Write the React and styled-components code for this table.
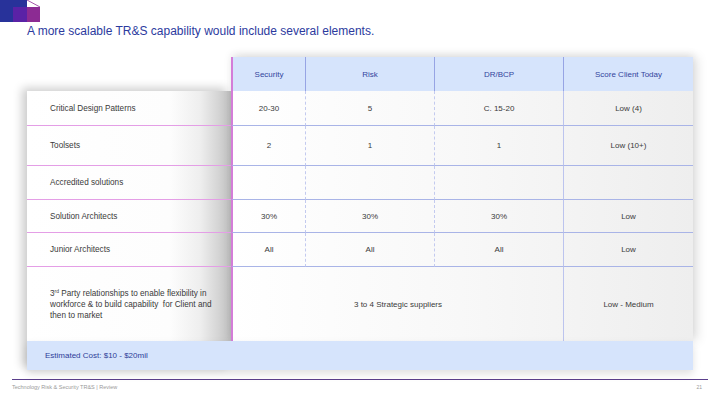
import styled, { createGlobalStyle } from 'styled-components';

const GlobalStyle = createGlobalStyle`
  html, body {
    margin: 0;
    padding: 0;
    background: #fff;
  }
  body {
    font-family: "Liberation Sans", Arial, sans-serif;
  }
`;

const rows = [
  { label: 'Critical Design Patterns', cells: ['20-30', '5', 'C. 15-20', 'Low (4)'] },
  { label: 'Toolsets', cells: ['2', '1', '1', 'Low (10+)'] },
  { label: 'Accredited solutions', cells: ['', '', '', ''] },
  { label: 'Solution Architects', cells: ['30%', '30%', '30%', 'Low'] },
  { label: 'Junior Architects', cells: ['All', 'All', 'All', 'Low'] },
];

const headers = ['Security', 'Risk', 'DR/BCP', 'Score Client Today'];

function App() {
  return (
    <Page>
      <GlobalStyle />
      <Logo>
        <svg width="41" height="23" viewBox="0 0 41 23">
          <rect x="0" y="0" width="27" height="22" fill="#28329a" />
          <rect x="13" y="7" width="14" height="15" fill="#5a22a6" />
          <rect x="27" y="7" width="13" height="15" fill="#8c2b93" />
          <path d="M27 0 L40 7" stroke="#8c2b93" strokeWidth="0.8" fill="none" />
        </svg>
      </Logo>
      <Title>A more scalable TR&amp;S capability would include several elements.</Title>

      <Table>
        <LeftPanel />
        <DataPanel />
        {headers.map((h, i) => (
          <HeadCell key={h} $col={i + 2} $first={i === 0}>{h}</HeadCell>
        ))}
        {rows.map((r, i) => (
          <Row key={r.label} r={r} row={i + 2} />
        ))}
        <LabelCell $row={7} $last>
          <span>
            3<sup>rd</sup> Party relationships to enable flexibility in
            <br />
            workforce &amp; to build capability&nbsp; for Client and
            <br />
            then to market
          </span>
        </LabelCell>
        <DataCell $row={7} $col="2 / 5" $first $last>3 to 4 Strategic suppliers</DataCell>
        <DataCell $row={7} $col={5} $last $solid>Low - Medium</DataCell>
        <CostBar>Estimated Cost: $10 - $20mil</CostBar>
      </Table>

      <FooterLine />
      <Footer>
        <span>Technology Risk &amp; Security TR&amp;S | Review</span>
        <PageNum>21</PageNum>
      </Footer>
    </Page>
  );
}

function Row({ r, row }) {
  return (
    <>
      <LabelCell $row={row}>{r.label}</LabelCell>
      {r.cells.map((c, i) => (
        <DataCell key={i} $row={row} $col={i + 2} $first={i === 0} $solid={i === 3}>
          {c}
        </DataCell>
      ))}
    </>
  );
}

const Page = styled.div`
  width: 720px;
  height: 405px;
  overflow: hidden;
  display: flex;
  flex-direction: column;
  background: #fff;
  & > * {
    flex-shrink: 0;
  }
`;

const Logo = styled.div`
  height: 22px;
  overflow: hidden;
  svg {
    display: block;
  }
`;

const Title = styled.div`
  margin: 1px 0 0 27px;
  font-size: 12px;
  line-height: 16px;
  color: #2c3a9e;
`;

const Table = styled.div`
  margin: 18px 0 0 27px;
  width: 666px;
  display: grid;
  grid-template-columns: 204px 74px 129px 129px 130px;
  grid-template-rows: 34px 35px 40px 34px 33px 34px 74px 29px;
  font-size: 8px;
  color: #3a3a3a;
`;

const LeftPanel = styled.div`
  grid-column: 1;
  grid-row: 2 / 9;
  background: linear-gradient(
    to right,
    #ffffff 0%,
    #fdfdfd 70%,
    #eeeeee 85%,
    #d4d4d4 94%,
    #bdbdbd 100%
  );
  box-shadow: -5px -3px 9px rgba(0, 0, 0, 0.2);
  z-index: 0;
`;

const DataPanel = styled.div`
  grid-column: 2 / 6;
  grid-row: 1 / 8;
  background: linear-gradient(to right, #ffffff 0%, #f8f8f8 50%, #eeeeee 100%);
  box-shadow: 5px 0 10px rgba(0, 0, 0, 0.1), 0 -3px 8px rgba(0, 0, 0, 0.08);
  z-index: 1;
`;

const HeadCell = styled.div`
  grid-row: 1;
  grid-column: ${(p) => p.$col};
  z-index: 2;
  display: flex;
  align-items: center;
  justify-content: center;
  background: #d6e4fc;
  color: #34449c;
  border-left: ${(p) => (p.$first ? '2px solid #d47dd8' : '1px solid #97a4e4')};
`;

const LabelCell = styled.div`
  grid-column: 1;
  grid-row: ${(p) => p.$row};
  z-index: 2;
  display: flex;
  align-items: center;
  padding-left: 23px;
  font-size: 8.2px;
  line-height: 11px;
  color: #3a3a3a;
  border-bottom: ${(p) => (p.$last ? 'none' : '1px solid #e49ee6')};
  sup {
    font-size: 5px;
    line-height: 0;
    vertical-align: 3px;
  }
`;

const DataCell = styled.div`
  grid-row: ${(p) => p.$row};
  grid-column: ${(p) => p.$col};
  z-index: 2;
  display: flex;
  align-items: center;
  justify-content: center;
  border-bottom: ${(p) => (p.$last ? 'none' : '1px solid #a9b4e7')};
  border-left: ${(p) =>
    p.$first ? '2px solid #d47dd8' : p.$solid ? '1px solid #bcc4ee' : '1px dashed #c3caef'};
`;

const CostBar = styled.div`
  grid-column: 1 / 6;
  grid-row: 8;
  z-index: 3;
  display: flex;
  align-items: center;
  padding-left: 18px;
  background: #d6e4fc;
  color: #2e3d98;
  box-shadow: 0 4px 8px rgba(0, 0, 0, 0.12);
`;

const FooterLine = styled.div`
  margin: 9px 12px 0 12px;
  height: 1px;
  background: #5b3f8c;
`;

const Footer = styled.div`
  margin: 3px 18px 0 12px;
  display: flex;
  justify-content: space-between;
  font-size: 5.5px;
  line-height: 8px;
  color: #9a9a9a;
`;

const PageNum = styled.span`
  font-size: 5px;
`;

export default App;
